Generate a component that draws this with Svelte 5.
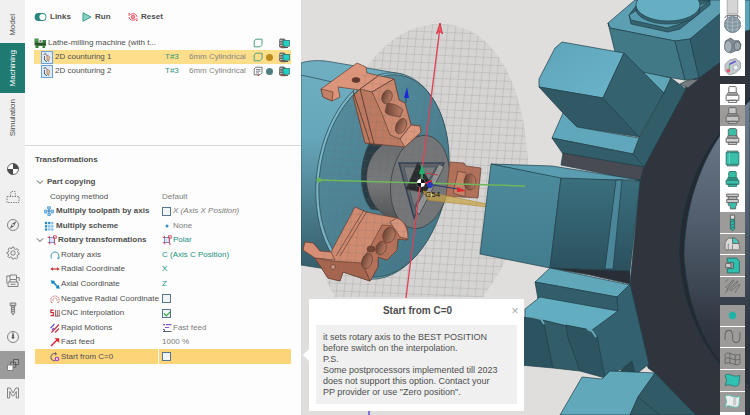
<script>
  const tabs = ['Model', 'Machining', 'Simulation'];
  const tools = ['origin', 'stock', 'compass', 'gear', 'machine', 'drill', 'gauge', 'copies', 'macro', 'misc'];
  const operations = [
    { name: '2D counturing 1', tool: 'T#3', desc: '6mm Cylindrical', dot: '#bd8a1c', active: true },
    { name: '2D counturing 2', tool: 'T#3', desc: '6mm Cylindrical', dot: '#4f7d80', lines: true }
  ];
  const params = [
    { label: 'Part copying', head: true },
    { label: 'Copying method', level: 'plain', value: 'Default' },
    { label: 'Multiply toolpath by axis', level: 'mid', bold: true, icon: 'axis', check: false, value: 'X (Axis X Position)', italic: true },
    { label: 'Multiply scheme', level: 'mid', bold: true, icon: 'scheme', valueIcon: 'dot', value: 'None' },
    { label: 'Rotary transformations', head: true, icon: 'polar', valueIcon: 'polar', value: 'Polar', green: true },
    { label: 'Rotary axis', level: 'sub', icon: 'arc', value: 'C (Axis C Position)', green: true },
    { label: 'Radial Coordinate', level: 'sub', icon: 'radial', value: 'X', green: true },
    { label: 'Axial Coordinate', level: 'sub', icon: 'axial', value: 'Z', green: true },
    { label: 'Negative Radial Coordinate', level: 'sub', icon: 'negative', check: false },
    { label: 'CNC interpolation', level: 'sub', icon: 'cnc', check: true },
    { label: 'Rapid Motions', level: 'sub', icon: 'rapid', valueIcon: 'feed', value: 'Fast feed' },
    { label: 'Fast feed', level: 'sub', icon: 'fast', value: '1000 %' },
    { label: 'Start from C=0', level: 'sub', icon: 'start', check: false, active: true }
  ];
  const viewGroups = [
    { id: 'render', items: ['view', 'sphere', 'part', 'axes'] },
    { id: 'holders', items: ['outline', 'holder', 'holderTop', 'cylinder', 'holderFull', 'holderLow', 'mill', 'workpiece', 'fixture', 'path'] },
    { id: 'geometry', items: ['point', 'curve', 'mesh', 'surface', 'solid', 'more'] }
  ];
  const grey = ['holder', 'mill', 'workpiece', 'fixture', 'path', 'point', 'curve', 'mesh', 'surface', 'solid'];
  let helpOpen = $state(true);
</script>

{#snippet paramIcon(kind)}
  <svg class="pi" viewBox="0 0 10 10" aria-hidden="true">
    {#if kind === 'axis'}
      <path d="M3.5 .8h3v2h-3zM.4 4h2.4v3H.4zM7.2 4h2.4v3H7.2zM3.8 7.5h2.6v2H3.8z" fill="#9bcdf0" stroke="#3d94cf" stroke-width=".7" />
      <path d="M5 3v4M3.3 5h3.4" stroke="#1d76b8" />
    {:else if kind === 'scheme'}
      <path d="M.5 .5h9v9h-9z" fill="#d5eaf7" />
      <path d="M1 1h2v2H1zM4.2 1h2v2h-2zM1 4.2h2v2H1zM1 7.4h2v2H1z" fill="#2484c4" />
      <path d="M7.4 1h2v2h-2zM4.2 4.2h2v2h-2zM7.4 4.2h2v2h-2zM4.2 7.4h2v2h-2zM7.4 7.4h2v2h-2z" fill="#84bce0" />
    {:else if kind === 'polar'}
      <rect x="2.4" y="2.6" width="5" height="5" fill="#dce8f8" stroke="#5479bd" stroke-width=".8" />
      <path d="M.6 2.6h2M2.400 .8v2M6.500 .8h2.800v2.400H6.500zM.8 7.600h2v1.800M7.400 7.400v1.800h1.800M7.400 3.200v4" fill="none" stroke="#cf3f55" stroke-width=".9" />
    {:else if kind === 'arc'}
      <path d="M1.5 8.5C.2 5 2 2 5 2s4.800 3 3.500 6.500M7 7.800l1.500 1 .9-1.700" fill="none" stroke="#3f9cab" />
    {:else if kind === 'radial'}
      <path d="M1.500 5h7" stroke="#c93636" stroke-width="1.200" /><path d="M.3 5l2.700-1.800v3.600zM9.700 5L7 3.200v3.600z" fill="#c93636" />
    {:else if kind === 'axial'}
      <path d="M1 1.500l1 3.500 1-1L7 8l-1 1 3.500.5L8.500 6l-1 1L4 3l.8-.8z" fill="#1888c0" stroke="#1888c0" stroke-width=".5" />
    {:else if kind === 'negative'}
      <path d="M1.200 8C0 4 2 2 5 2s5 2 3.800 6M3 7C2.600 5 3.400 4 5 4s2.400 1 2 3M1 8.500h2M7 8.500h2" fill="none" stroke="#c86a70" stroke-width=".8" stroke-dasharray="1.600 .6" />
    {:else if kind === 'cnc'}
      <path d="M3.600 2.200H.9v2.400h2.400v3H.5" fill="none" stroke="#c92a35" stroke-width="1.200" />
      <path d="M5.500 2v6.500M7.300 2v6.500M9.200 2v6.500M4.600 8h5" stroke="#8a5a60" stroke-width=".9" />
    {:else if kind === 'rapid'}
      <path d="M.5 5L4.500 1M2 7l2-2" stroke="#6b55c9" stroke-width="1.200" /><path d="M1.500 9.500l7.500-8M5 9.500l4-4" stroke="#c8324a" stroke-width="1.200" />
    {:else if kind === 'fast'}
      <path d="M1 9l6.500-6.500" stroke="#e0222e" stroke-width="1.400" /><path d="M4.500 1.300h4.700V6z" fill="#e0222e" />
    {:else if kind === 'start'}
      <path d="M6 1.800C2.800.8.8 3 .9 5.400S3 9 5 8.700M5 .4l1.600 1.500L5 3.300" fill="none" stroke="#544b70" />
      <circle cx="7" cy="7" r="1.800" fill="#e9c8f0" stroke="#a03ec0" stroke-width="1.100" />
    {:else if kind === 'feed'}
      <path d="M1 1.600h2M4 1.600h5.500M3 4.500h4" stroke="#8657c9" stroke-width="1.200" /><path d="M1 8.500h8.500M1 6.500h1.500v2" fill="none" stroke="#5a6573" />
    {:else if kind === 'dot'}
      <circle cx="5" cy="5" r="1.500" fill="#3b8fb9" />
    {/if}
  </svg>
{/snippet}

{#snippet machineIcon()}
  <svg class="mach" viewBox="0 0 12 11" aria-hidden="true">
    <path d="M2 .6h4l1.500 1v8.600H3L1 8.800V2z" fill="#6f6f6f" /><path d="M1.500 2.500h4.500M1.500 5h4M2 7.500h4" stroke="#c9c9c9" stroke-width=".8" />
    <rect x="5" y="2.400" width="6.400" height="5.800" fill="#23d0c4" stroke="#2b6560" stroke-width=".7" /><path d="M5.500 9.500h4.500" stroke="#555" />
    <circle cx="4" cy="9" r="1" fill="#a8483a" />
  </svg>
{/snippet}

{#snippet shapeIcon(lines)}
  <svg class="pi" viewBox="0 0 10 10" aria-hidden="true">
    <path d="M2.800 1.200H9v5.600L7 8.800H1.200V3z" fill="none" stroke={lines ? '#6c7773' : '#4f9f83'} />
    {#if lines}<path d="M3 3.500h4.500M3 5.200h4.500M3 6.900h3" stroke="#667" stroke-width=".8" /><path d="M5.300 8.500V10" stroke="#d44" stroke-width="1.200" />{/if}
  </svg>
{/snippet}

{#snippet sideIcon(kind)}
  <svg class="si" viewBox="0 0 14 14" fill="none" stroke="#777" stroke-width=".9" aria-hidden="true">
    {#if kind === 'origin'}
      <circle cx="7" cy="7" r="5.500" fill="#fff" stroke="#555" /><path d="M7 7V1.500A5.500 5.500 0 0 1 12.500 7zM7 7v5.500A5.500 5.500 0 0 1 1.500 7z" fill="#4a4a4a" stroke="none" />
    {:else if kind === 'stock'}
      <path d="M4.500 6L5 1.500h4L9.500 6M1 6.500h12v6H1z" stroke-dasharray="1.500 1" />
    {:else if kind === 'compass'}
      <circle cx="7" cy="7" r="5.500" /><path d="M10.500 3L8 8.200 3.500 11 6 5.800z" fill="#666" stroke="none" /><circle cx="7" cy="7" r="1" fill="#eee" stroke="none" />
    {:else if kind === 'gear'}
      <path d="M6 1.200h2l.4 1.700 1.300.6 1.500-.9 1.300 1.400-.9 1.500.5 1.200 1 .3v1.400l-1.500.5-.6 1.200.8 1.500-1.400 1.300-1.500-.9-1 .5L7.700 13H6.300l-.5-1.600-1.200-.5-1.500.9-1.300-1.400.9-1.500-.5-1.100L.9 7.500V6.300l1.500-.4.6-1.300-.9-1.500 1.400-1.200 1.500.8 1-.5z" /><circle cx="7" cy="7" r="2.200" />
    {:else if kind === 'machine'}
      <path d="M4 1h6.500v4.500H4zM2 8h10v4.500H2zM3.500 8l.8-2.500M10.800 8L10 5.500M.8 2v7.500M13.200 3.500V7M.8 2H4M10.500 3.500h2.700M4.500 10.300h5" />
    {:else if kind === 'drill'}
      <path d="M4.200 1h5.600v2.700H4.200zM5.400 3.700h3.200v7L7 13l-1.600-2.300zM5.400 6l3.200-1M5.400 8l3.200-1M5.400 10l3.200-1" fill="#ccc" />
    {:else if kind === 'gauge'}
      <circle cx="7" cy="7" r="5.500" /><path d="M7 1.500l1.200 5H5.800z" fill="#555" stroke="none" /><circle cx="7" cy="7.500" r="1.300" fill="#555" stroke="none" />
    {:else if kind === 'copies'}
      <path d="M7.500 1.500h5v5h-5zM4.700 4.200h5v5h-5z" fill="#aaa" stroke="#555" /><path d="M1.500 7h5.500v5.500H1.500z" fill="#fff" />
    {:else if kind === 'macro'}
      <path d="M1.500 12V2h2.700L7 7l2.800-5h2.700v10h-2.200V5.500L7.500 10h-1L3.700 5.500V12z" />
    {:else}
      <path d="M3.500 4V1.500h7V4M1.500 4h11v8h-11z" />
    {/if}
  </svg>
{/snippet}

{#snippet viewIcon(kind)}
  <svg class="vi" viewBox="0 0 18 18" fill="none" stroke="#666" stroke-width=".9" aria-hidden="true">
    {#if kind === 'view'}
      <path d="M4 0v13h10V0" fill="#d5d5d5" stroke="#aaa" /><path d="M1.500 17l3-3v3M16.500 17l-3-3v3M5 14.500h8" stroke="#555" />
    {:else if kind === 'sphere'}
      <circle cx="9" cy="9" r="7.600" fill="#8798a3" stroke="#687984" /><path d="M3 5.500c4 2 8 2 12 0M1.500 9c5 2 10 2 15 0M3 13c4 1.500 8 1.500 12 0M9 1.500v15M5.500 2.500c-2 4-2 9 0 13M12.500 2.500c2 4 2 9 0 13" stroke="#b3c1ca" stroke-width=".6" />
    {:else if kind === 'part'}
      <path d="M2 5l5-3 4 2.500h4l2 3.500-1 5-4 1-5 2-5-3z" fill="#7f8c95" stroke="#66737c" /><ellipse cx="5" cy="10" rx="3.500" ry="5.500" fill="#a6b1b8" stroke="#6e7b83" /><ellipse cx="13.500" cy="9.500" rx="3" ry="4" fill="#98a5ad" />
    {:else if kind === 'axes'}
      <path d="M2 7l4-4 6-1.500L16.500 5v6L12 15l-6 2-4-4z" fill="#c3c9ce" stroke="#98a1a8" /><path d="M6 13V7l5-3" stroke="#48b568" /><path d="M6 7l6-3" stroke="#6654d0" stroke-width="1.400" /><circle cx="5" cy="13" r="1.800" fill="#e05a70" stroke="none" /><circle cx="12" cy="10" r="2.500" fill="#eceff0" stroke="#a9b2b8" />
    {:else if kind === 'outline' || kind === 'holder'}
      <path d="M6 1.500h6l.5 1v5h-7v-5zM4.500 7.500h9v2h-9zM3 9.500h12v5H3zM5 14.500h8v2H5z" fill={kind === 'outline' ? '#fff' : '#c5c5c5'} />
    {:else if kind === 'holderTop'}
      <path d="M6 1.500h6l1 1v6H5v-6z" fill="#38bfa9" /><path d="M4.500 8.500h9v2h-9zM3 10.500h12v4H3zM5 14.500h8v2H5z" fill="#cfcfcf" />
    {:else if kind === 'cylinder'}
      <rect x="4" y="2" width="10" height="14" fill="#38bfa9" /><rect x="3" y="3.500" width="12" height="11" fill="#38bfa9" stroke="#287e76" /><path d="M6 3.500v11" stroke="#7ad9ca" />
    {:else if kind === 'holderFull'}
      <path d="M6 1.500h6l.5 1v5h-7v-5zM4.500 7.500h9v2h-9zM3 9.500h12v4H3zM5 13.500h8v2H5z" fill="#38bfa9" stroke="#2c756c" />
    {:else if kind === 'holderLow'}
      <path d="M3.500 2h11v2.500h-11zM5 4.500h8V7H5zM3.500 7h11v3h-11z" fill="#ccc" /><path d="M5 10h8v2.500l-1 1V16H7v-2.500l-2-1z" fill="#38bfa9" />
    {:else if kind === 'mill'}
      <path d="M7 2h4v4H7z" fill="#ddd" /><path d="M7 6h4v9l-2 2-2-2z" fill="#2cbcab" stroke="#396d68" /><path d="M7 9l4-2M7 12l4-2M7 15l4-2" stroke="#3a605f" />
    {:else if kind === 'workpiece'}
      <path d="M2 15v-7l3-4h6l4 4 1 7z" fill="#d9d9d9" stroke="#777" /><path d="M9 9V3.500a6 6 0 0 1 6 5.500z" fill="#45c6b4" /><path d="M5 15V9M9 15v-5" stroke="#888" />
    {:else if kind === 'fixture'}
      <path d="M4 2h9l2.500 3v11H4v-4h6V6H4z" fill="#2fc0af" stroke="#346f69" /><path d="M2.500 7h5v4h-5z" fill="#ccc" />
    {:else if kind === 'path'}
      <path d="M2 5l3-3M2 10c2 0 7-8 8-7s-7 8-6 9S13 3 14 4s-8 8-7 9 8-7 9-6-5 6-4 8M2 15l3-3" stroke="#6a6a6a" />
    {:else if kind === 'point'}
      <circle cx="9" cy="9" r="3.500" fill="#20b2a6" stroke="none" />
    {:else if kind === 'curve'}
      <path d="M2 12V8c0-6.500 7-6.500 7 0v2c0 6.500 7 6.500 7 0V5" stroke="#6c6c6c" stroke-width="1.100" />
    {:else if kind === 'mesh'}
      <path d="M2 5c4-4 8 3 14 0v9c-5 3-9-3-14 0zM2 9.500c4-3.500 9 3 14 0M6.500 4v9.500M11.500 6v9" stroke="#666" />
    {:else if kind === 'surface' || kind === 'solid'}
      <path d="M2 4c4-3 8 3 14 0l-1 9c-4 4-8-2-13 1l1.500-5z" fill={kind === 'surface' ? '#2fc2b2' : '#eceeee'} stroke={kind === 'surface' ? '#3a7972' : '#5fbfb3'} />
      {#if kind === 'solid'}<path d="M11 5.500v7" stroke="#c7caca" stroke-width="3" />{/if}
    {/if}
  </svg>
{/snippet}

<div class="app">
  <nav class="side" aria-label="Workspace">
    <div class="tabs">
      {#each tabs as tab}
        <button class="tab" class:active={tab === 'Machining'}><span>{tab}</span></button>
      {/each}
    </div>
    {#each tools as tool}
      <button class="tool" class:active={tool === 'copies'} aria-label={tool}>{@render sideIcon(tool)}</button>
    {/each}
  </nav>

  <main class="panel">
    <div class="actions">
      <button><svg class="switch" viewBox="0 0 13 10" aria-hidden="true"><rect x=".6" y="1" width="11.800" height="8" rx="4" fill="#27877e" /><circle cx="8.500" cy="5" r="3.100" fill="#fff" /></svg>Links</button>
      <button><svg viewBox="0 0 10 10" aria-hidden="true"><path d="M1 .8L9 5 1 9.200z" fill="#8bd2c3" stroke="#379c88" /></svg>Run</button>
      <button><svg viewBox="0 0 10 10" fill="none" stroke="#e0505a" stroke-width=".9" aria-hidden="true"><path d="M1 4V1l1.600 1.500A4.200 4.200 0 0 1 9.200 5M9 6v3L7.400 7.500A4.200 4.200 0 0 1 .8 5" /><circle cx="5" cy="5" r="1.800" fill="#f2a0a4" /></svg>Reset</button>
    </div>

    <div class="ops">
      <div class="op root">
        <svg class="lathe" viewBox="0 0 13 12" aria-hidden="true"><path d="M.5 1.500h4v4h4V3H12v6h-1v2H8.500V9h-4v2h-3V8.500h-1z" fill="#397f3c" /><path d="M1 7h11" stroke="#222" /><path d="M5.500 4h2" stroke="#333" stroke-width="1.200" /><path d="M1.500 3h2" stroke="#8bc87f" /></svg>
        <span class="name">Lathe-milling machine (with t...</span>
        {@render shapeIcon(false)}<i class="dot"></i>{@render machineIcon()}
      </div>
      {#each operations as op}
        <div class="op" class:active={op.active}>
          <svg class="opicon" viewBox="0 0 12 13" aria-hidden="true"><rect x=".5" y=".5" width="11" height="12" fill="#dce9fa" stroke="#6c9fdd" /><path d="M2.500 3.500l2-1 1 2M3.500 5v4l2 1.500" fill="none" stroke="#444" stroke-width=".8" /><path d="M6.500 4l2 2-1 4.500L6 9V6z" fill="#f5d27e" stroke="#8c4c60" stroke-width=".6" /><path d="M4 9l2 2" stroke="#2d9850" /></svg>
          <span class="name">{op.name}</span>
          <span class="tnum">{op.tool}</span>
          <span class="desc">{op.desc}</span>
          {@render shapeIcon(op.lines)}<i class="dot" style:background={op.dot}></i>{@render machineIcon()}
        </div>
      {/each}
    </div>

    <section class="props">
      <h2>Transformations</h2>
      <div class="rows">
        {#each params as p, i}
          <div class="row" class:active={p.active}>
            <div class="label {p.level ?? 'head'}" class:bold={p.head || p.bold}>
              {#if p.head}<svg class="chev" viewBox="0 0 8 8" aria-hidden="true"><path d="M1 2.500l3 3 3-3" fill="none" stroke="#555" /></svg>{/if}
              {#if p.icon}{@render paramIcon(p.icon)}{/if}
              {#if p.check !== undefined}<label for="param-{i}">{p.label}</label>{:else}<span>{p.label}</span>{/if}
            </div>
            <div class="value" class:green={p.green} class:italic={p.italic}>
              {#if p.check !== undefined}<input type="checkbox" id="param-{i}" checked={p.check} />{/if}
              {#if p.valueIcon}{@render paramIcon(p.valueIcon)}{/if}
              {#if p.value}<span>{p.value}</span>{/if}
            </div>
          </div>
        {/each}
      </div>
    </section>
  </main>

  <section class="scene" aria-label="3D view">
    <svg class="view3d" viewBox="301 0 449 415" preserveAspectRatio="xMinYMin slice" aria-hidden="true">
      <defs>
        <pattern id="grid" width="7.700" height="7.700" patternUnits="userSpaceOnUse" patternTransform="matrix(1 .04 -.1 1 440 24)">
          <path d="M0 0H7.700M0 0V7.700" fill="none" stroke="#60686a" stroke-opacity=".5" stroke-width=".8" />
        </pattern>
        <linearGradient id="body" x1="0" y1="0" x2="0" y2="1"><stop offset="0" stop-color="#70afc2" /><stop offset=".35" stop-color="#67a7bb" /><stop offset=".8" stop-color="#416f7d" /><stop offset="1" stop-color="#335966" /></linearGradient>
        <linearGradient id="face" x1="0" y1="0" x2="1" y2="1"><stop offset="0" stop-color="#568fa0" /><stop offset="1" stop-color="#427585" /></linearGradient>
        <linearGradient id="bar" x1="0" y1="0" x2="0" y2="1"><stop offset="0" stop-color="#686a6d" /><stop offset=".5" stop-color="#77797b" /><stop offset="1" stop-color="#48494b" /></linearGradient>
        <linearGradient id="hub" x1="0" y1="0" x2="0" y2="1"><stop offset="0" stop-color="#727f8e" /><stop offset=".45" stop-color="#505c6b" /><stop offset=".8" stop-color="#303742" /><stop offset="1" stop-color="#2a2e37" /></linearGradient>
        <linearGradient id="lit" x1="0" y1="0" x2="1" y2="1"><stop offset="0" stop-color="#5fa4b9" /><stop offset="1" stop-color="#6ab4ca" /></linearGradient>
        <linearGradient id="block" x1="0" y1="0" x2="0" y2="1"><stop offset="0" stop-color="#4c8b9d" /><stop offset="1" stop-color="#427d8e" /></linearGradient>
        <linearGradient id="shade" x1="0" y1="0" x2="0" y2="1"><stop offset="0" stop-color="#3a6f7e" /><stop offset="1" stop-color="#2b515d" /></linearGradient>
        <linearGradient id="hole" x1="0" y1="0" x2="1" y2="0"><stop offset="0" stop-color="#6d4233" /><stop offset="1" stop-color="#bd7e65" /></linearGradient>
        <clipPath id="disc"><path d="M335 297H483C508 262 529 222 528 165C526 96 500 24 440 24C400 24 372 55 358 82C318 150 300 240 335 297Z" /></clipPath>
      </defs>
      <path d="M301 0H750V415H301Z" fill="#dfdedd" />
      <path d="M335 297H483C508 262 529 222 528 165C526 96 500 24 440 24C400 24 372 55 358 82C318 150 300 240 335 297Z" fill="#d5d4d3" />

      <g stroke="#294752" stroke-width=".7">
        <path d="M301 63C310 60 321 60 332 62L402 74C440 90 448 130 448 155C446 210 415 270 376 277L301 265Z" fill="url(#body)" />
        <path d="M301 75L346 85" fill="none" />
        <ellipse cx="382" cy="176" rx="65" ry="104" transform="rotate(9 382 176)" fill="#79b6c7" />
        <ellipse cx="384" cy="176" rx="64" ry="102" transform="rotate(9 384 176)" fill="url(#face)" />
        <path d="M378 132C360 148 355 190 371 209L392 212L395 145Z" fill="#293c45" />
      </g>
      <g stroke="#38393b" stroke-width=".7">
        <path d="M420 136C389 133 370 150 367 171C364 192 374 211 389 217L421 228Z" fill="url(#bar)" />
        <ellipse cx="420" cy="182" rx="29" ry="47" transform="rotate(9 420 182)" fill="#747678" />
        <path d="M399 163H444L414 218Z" fill="#606264" stroke="#303e57" stroke-width="1.500" />
        <path d="M404 167H436L414 207Z" fill="#787a7b" stroke="#3d526b" />
        <path d="M439 164L444 167L419 215L415 209Z" fill="#929495" />
        <path d="M418 162L406 189L425 193L431 184Z" fill="#292a2b" />
      </g>

      <g stroke="#663e31" stroke-width=".7" stroke-linejoin="round">
        <path d="M450 162L464 163L466 166L481 168L478 198L446 196Z" fill="#b47159" />
        <path d="M458 171L466 173L465 197L453 193Z" fill="#c98368" />
        <ellipse cx="470" cy="182" rx="6" ry="8" fill="url(#hole)" />

        <path d="M353 96L378 98L380 145L365 143Z" fill="#8f5745" />
        <path d="M321 89L357 63L366 67L367 73L394 79L372 92L353 89L338 87L340 97L332 101L323 97Z" fill="#dc957a" />
        <path d="M321 89L333 92L332 101L323 97Z" fill="#c58068" />
        <path d="M394 79L399 100L405 103L411 125L420 126L421 132L405 147L365 143L353 96L360 89L372 92Z" fill="#bd7a61" />
        <path d="M372 92L394 79L399 100L405 103L411 125L400 139L390 135L382 114Z" fill="#cc886e" />
        <path d="M400 139L411 125L420 126L421 132L405 147Z" fill="#dc987d" />
        <path d="M353 91L370 143M360 89L374 144M360 89L378 76" fill="none" stroke-width="1" />
        <ellipse cx="356" cy="80" rx="4" ry="2.500" fill="#60392e" />
        <ellipse cx="387" cy="97" rx="5" ry="7" transform="rotate(20 387 97)" fill="url(#hole)" />
        <path d="M387 104C390 102 400 106 403 110L400 117C394 116 387 115 385 112Z" fill="url(#hole)" />
        <ellipse cx="401" cy="126" rx="5" ry="8" transform="rotate(25 401 126)" fill="url(#hole)" />

        <path d="M355 207L366 212L397 218C403 221 408 226 408 233L407 240L398 239L397 250L387 260L378 257L378 267L370 281L343 272L340 281L328 278L315 258L303 250L305 242L313 243L320 251L331 252Z" fill="#cf8a70" />
        <path d="M362 262L382 225L396 226L407 240L398 239L397 250L387 260L378 257L378 267L370 281Z" fill="#b77259" />
        <path d="M331 261L362 263L370 281L343 272L340 281L328 278L315 258Z" fill="#a7654e" />
        <path d="M303 250L305 242L313 243L320 251L331 252L335 260L315 258Z" fill="#d68f75" />
        <path d="M367 211L340 256M364 210L336 256" fill="none" />
        <path d="M397 218C404 221 408 227 408 239L400 237L390 222Z" fill="#d8957b" />
        <ellipse cx="389" cy="235" rx="6" ry="8" transform="rotate(20 389 235)" fill="url(#hole)" />
        <ellipse cx="381" cy="248" rx="5" ry="7" transform="rotate(20 381 248)" fill="url(#hole)" />
        <ellipse cx="367" cy="261" rx="5" ry="8" transform="rotate(20 367 261)" fill="url(#hole)" />
        <ellipse cx="371" cy="249" rx="4" ry="3" fill="#754735" />
        <circle cx="333" cy="267" r="2.500" fill="#cb947f" />
      </g>

      <g clip-path="url(#disc)"><path d="M301 0H530V298H301Z" fill="url(#grid)" opacity=".8" /></g>
      <path d="M423 191L487 204V207L428 200Z" fill="#c9a444" fill-opacity=".7" stroke="#b18b30" stroke-width=".6" />

      <g stroke="#1f3d47" stroke-width=".7" stroke-linejoin="round">
        <path d="M720 0H750V415H690L655 373L648 368L630 284L640 180L643 167L688 83L719 62Z" fill="#30343d" />
        <path d="M750 96L720 132C694 165 679 208 679 255C682 304 700 342 720 365L750 385Z" fill="#242932" />
        <path d="M750 100L726 127C699 163 685 208 684 255C687 304 703 340 722 363L750 382Z" fill="url(#hub)" />
        <path d="M742 0H750V30L742 32Z" fill="#5ea3b8" />

        <path d="M608 23L635 0H722V13L690 39L675 41L610 28Z" fill="#5d9fb2" />
        <path d="M608 23L610 28L675 41L685 80L655 75L638 72L615 52Z" fill="#417987" />
        <path d="M675 41L690 39L699 78L685 80Z" fill="#3a6e7d" />
        <path d="M690 39L722 12V61L699 78Z" fill="#305c69" />
        <path d="M629 15L636 6L710 0V5L680 29L668 32L631 24Z" fill="#35636f" />
        <path d="M629 15L645 5H700L710 0L680 24L667 28L631 20Z" fill="#569cae" />
        <ellipse cx="668" cy="9" rx="32" ry="15" fill="#34616d" />
        <ellipse cx="668" cy="5" rx="32" ry="16" fill="#66afc2" />

        <path d="M643 72L671 78L664 93L624 80Z" fill="#60a5b8" />
        <path d="M671 78L686 89L644 167L633 154L639 138L664 93Z" fill="#315d69" />
        <path d="M562 42L624 53L603 98L539 87V79L555 48Z" fill="url(#lit)" />
        <path d="M539 87L603 98L640 137L577 127L562 112Z" fill="#315965" />
        <path d="M624 53L664 93L639 137L603 98Z" fill="#35626f" />
        <path d="M563 113L552 138L633 154L639 138L577 127Z" fill="#61a7bb" />
        <path d="M552 138L633 154L644 167L563 154Z" fill="#315e6a" />
        <path d="M563 153L644 167L640 181L561 165Z" fill="#494b53" />
        <path d="M688 80L699 79L688 88L680 84Z" fill="#777b80" />

        <path d="M491 164L552 166L640 180L561 179Z" fill="#5b9db0" />
        <path d="M491 164L561 178L550 268L480 254Z" fill="url(#block)" />
        <path d="M561 178L640 181L630 271L550 268Z" fill="url(#shade)" />
        <path d="M616 180H622L613 269H605Z" fill="#4b8799" />
        <path d="M550 268L630 271V284L590 275Z" fill="#292d35" />

        <path d="M550 268L630 285L617 297L535 282Z" fill="#60a7ba" />
        <path d="M535 282L617 297L618 311L538 299Z" fill="#315e6a" />
        <path d="M540 297L618 311L594 331L525 318V309Z" fill="#63adc1" />
        <path d="M630 284L649 364L635 375L632 363L605 378L592 330L618 311L617 297Z" fill="#33616f" />
        <path d="M520 317L540 319L545 325L553 368L520 365Z" fill="#2c5360" />
        <path d="M543 320L567 326L580 371L553 368Z" fill="#315c68" />
        <path d="M566 325L591 330L597 336L605 378L580 371L568 338Z" fill="#2d5561" />
        <path d="M533 317L541 319L544 324M587 329L592 331L596 337" fill="none" stroke="#67a6b5" stroke-width="2" />
        <path d="M621 370L632 361L635 375L621 372Z" fill="#284853" />

        <path d="M582 377L602 379L610 371L655 373L638 397L630 415H560Z" fill="#62a8bb" />
        <path d="M655 373L696 415H630L638 397Z" fill="#305a66" />
        <path d="M638 397L660 415" fill="none" />
      </g>

      <path d="M440 27L406 298" stroke="#df4053" stroke-width="1.300" />
      <path d="M436.500 34L440 23L442.500 34L439.500 31Z" fill="#ed5965" stroke="#d63549" />
      <path d="M317 180L525 186" stroke="#6fb85a" stroke-width="1.400" /><circle cx="319" cy="180" r="2.500" fill="#66b45b" />
      <path d="M428 184L463 190" stroke="#233a75" /><path d="M457 187L466 191L457 192Z" fill="#df252f" />
      <path d="M422 184V172" stroke="#18a568" stroke-width="2" /><path d="M419 174L422 164L425 174Z" fill="#20b06f" />
      <path d="M425 173L438 175" stroke="#b93e43" />
      <path d="M424 183L432 180V187Z" fill="#dc2534" /><circle cx="430" cy="185" r="3" fill="#273aba" />
      <circle cx="421" cy="183" r="4" fill="#fff" /><path d="M421 183V179A4 4 0 0 1 425 183ZM421 183V187A4 4 0 0 1 417 183Z" fill="#111" />
      <path d="M407 87L409 98H404Z" fill="#1d27dc" /><path d="M406 98V103" stroke="#2c4b85" />
      <path d="M369 411V415" stroke="#5b51d8" stroke-width="1.500" />
      <circle cx="431" cy="195" r="1.500" fill="#fff0a0" />
      <text x="425" y="197">G54</text>
    </svg>

    {#if helpOpen}
      <aside class="help">
        <header><h3>Start from C=0</h3><button aria-label="Close" onclick={() => (helpOpen = false)}>×</button></header>
        <p>it sets rotary axis to the BEST POSITION<br />before switch on the interpolation.<br />P.S.<br />Some postprocessors implemented till 2023<br />does not support this option. Contact your<br />PP provider or use "Zero position".</p>
      </aside>
    {/if}

    <div class="viewbar">
      {#each viewGroups as group}
        <div class="group {group.id}">
          {#each group.items as item}
            <button class:grey={grey.includes(item)} aria-label={item}>{@render viewIcon(item)}</button>
          {/each}
        </div>
      {/each}
    </div>
  </section>
</div>

<style>
  :global(body) { margin: 0; }
  .app { display: grid; grid-template-columns: 25px 276px 1fr; height: 100vh; overflow: hidden; font: 8px/10px "Liberation Sans", Arial, sans-serif; color: #4e4e4e; background: #fdfdfd; }
  .app :global(*) { box-sizing: border-box; }
  button { font: inherit; color: inherit; border: 0; padding: 0; margin: 0; background: none; }
  svg { display: block; flex: none; }

  .side { background: #f0f0f0; overflow: hidden; display: flex; flex-direction: column; }
  .tabs { display: flex; flex-direction: column; flex: none; height: 155px; padding-top: 7px; }
  .tab { height: 36px; display: grid; place-items: center; }
  .tab + .tab { height: 50px; }
  .tab span { writing-mode: vertical-rl; transform: rotate(180deg); }
  .tab.active { background: #1f7a72; color: #fff; }
  .tool { flex: none; height: 28px; display: grid; place-items: center; }
  .tool.active { background: #9b9b9b; }
  .si { width: 14px; height: 14px; }

  .panel { display: flex; flex-direction: column; min-width: 0; }
  .actions { display: grid; grid-template-columns: 48px 46px 1fr; padding: 11px 9px 0; font-weight: bold; }
  .actions button { display: flex; align-items: center; gap: 3px; height: 11px; }
  .actions svg { width: 10px; height: 10px; }
  .actions .switch { width: 13px; }

  .ops { padding: 14px 10px 0 9px; height: 124px; border-bottom: 1px solid #dcd7d7; }
  .op { display: flex; align-items: center; height: 14px; padding: 0 1px 0 7px; white-space: nowrap; }
  .op.root { padding-left: 0; }
  .op.active { background: #fddf8b; }
  .name { flex: 1; min-width: 0; }
  .lathe { width: 13px; height: 12px; margin-right: 1px; }
  .opicon { width: 12px; height: 13px; margin-right: 2px; }
  .tnum { width: 24px; color: #339479; }
  .desc { width: 64px; color: #878582; }
  .dot { width: 7px; height: 7px; border-radius: 50%; margin: 0 5px 0 3px; }
  .pi { width: 10px; height: 10px; }
  .mach { width: 12px; height: 11px; }

  .props { padding: 8px 10px 0; }
  h2 { margin: 0 0 10px; font-size: 8px; line-height: 11px; }
  .rows { display: grid; grid-auto-rows: 1fr; height: 189px; }
  .row { display: grid; grid-template-columns: 123px 1fr; column-gap: 1px; white-space: nowrap; }
  .label, .value { display: flex; align-items: center; gap: 1px; min-width: 0; }
  .label.head { padding-left: 1px; gap: 3px; }
  .label.head .pi { margin-right: -2px; }
  .label.mid { padding-left: 9px; gap: 2px; }
  .label.plain, .label.sub { padding-left: 15px; }
  .bold { font-weight: bold; }
  .chev { width: 8px; height: 8px; }
  .value { padding-left: 3px; color: #7b7b7b; }
  .value.green { color: #21917f; }
  .value.italic { font-style: italic; }
  .row.active > div { background: #fdd578; }
  input { appearance: none; width: 9px; height: 9px; margin: 0 1px 0 0; border: 1px solid #587690; background: #f1f4f5; display: grid; place-items: center; }
  input:checked::after { content: ""; width: 5px; height: 3px; border: solid #239b35; border-width: 0 0 1px 1px; transform: rotate(-45deg); }

  .scene { position: relative; overflow: hidden; min-width: 0; }
  .view3d { width: 100%; height: 100%; }
  .view3d text { font-size: 8px; fill: #111; }
  .help { position: absolute; left: 8px; top: 299px; width: 215px; padding: 6px 7px 7px; background: #fff; }
  .help::before { content: ""; position: absolute; left: -6px; top: 50px; border: solid transparent; border-width: 6px 6px 6px 0; border-right-color: #fff; }
  .help header { display: flex; align-items: center; height: 12px; margin-bottom: 8px; }
  .help h3 { flex: 1; margin: 0; padding-left: 8px; text-align: center; font-size: 10px; line-height: 12px; }
  .help button { width: 8px; margin-right: -2px; font-size: 12px; line-height: 12px; color: #aaa; }
  .help p { margin: 0; padding: 7px 7px 6px; background: #f0f0f0; font-size: 9px; line-height: 11px; white-space: nowrap; }

  .viewbar { position: absolute; top: 0; right: 5px; width: 25px; display: flex; flex-direction: column; gap: 8px; }
  .group { display: grid; grid-auto-rows: 1fr; gap: 1px; background: #fff; }
  .group button { display: grid; place-items: center; min-height: 0; }
  .group .grey { background: #9c9b9a; }
  .vi { width: 19px; height: 19px; }
  .render { height: 76px; grid-template-rows: 13px; overflow: hidden; }
  .render button:first-child { align-items: end; }
  .holders { height: 213px; }
  .geometry { height: 129px; }
</style>
